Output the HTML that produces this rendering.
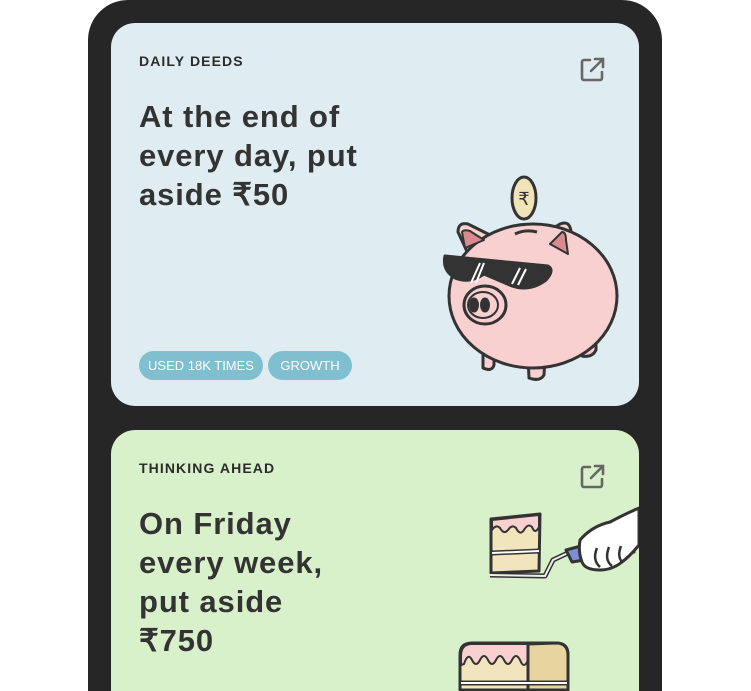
<!DOCTYPE html>
<html><head><style>
html,body{margin:0;padding:0;background:#fff;width:751px;height:691px;overflow:hidden;font-family:"Liberation Sans",sans-serif;position:relative;}
.frame{position:absolute;left:88px;top:0;width:574px;height:691px;background:#262626;border-radius:40px 40px 0 0;}
.card{position:absolute;left:111px;width:528px;border-radius:24px;overflow:hidden;}
.c1{top:23px;height:383px;background:#dfedf2;}
.c2{top:430px;height:261px;background:#d9f1cb;border-radius:24px 24px 0 0;}
.lab{position:absolute;left:28px;font-size:14px;font-weight:bold;color:#2b2b2b;letter-spacing:1.1px;}
.h{position:absolute;left:28px;font-size:31px;font-weight:bold;color:#333;line-height:39px;letter-spacing:0.9px;}
.pill{position:absolute;top:328px;height:29px;border-radius:15px;background:#7fbfcf;color:#fff;font-size:13px;line-height:29px;text-align:center;}
.ext{position:absolute;right:33px;}
</style></head><body>
<div class="frame"></div>
<div class="card c1">
 <div class="lab" style="top:30px">DAILY DEEDS</div>
 <div class="h" style="top:74px">At the end of<br>every day, put<br>aside ₹50</div>
 <div class="pill" style="left:28px;width:124px">USED 18K TIMES</div>
 <div class="pill" style="left:157px;width:84px">GROWTH</div>
 <svg class="ext" style="top:33px" width="28" height="28" viewBox="0 0 28 28" fill="none" stroke="#666" stroke-width="2.6" stroke-linecap="round"><path d="M12 4H6a2 2 0 0 0-2 2v16a2 2 0 0 0 2 2h16a2 2 0 0 0 2-2v-6"/><path d="M13 15L25 3M17 3h8v8"/></svg>
 <svg style="position:absolute;left:319px;top:147px" width="200" height="220" viewBox="430 170 200 220" stroke="#333" stroke-width="3" stroke-linejoin="round">
  <ellipse cx="524" cy="198" rx="12" ry="21" fill="#f1e3b8"/>
  <text x="524" y="205" font-size="18" text-anchor="middle" fill="#333" stroke="none">₹</text>
  <path d="M470 258 L458 232 Q458 222 468 224 L500 240Z" fill="#f9d0d0"/>
  <path d="M540 236 L560 224 Q570 220 571 232 L572 262Z" fill="#f9d0d0"/>
  <path d="M483 353 L483 368 Q492 372 494 365 L494 350Z" fill="#f9d0d0"/>
  <path d="M528 357 L529 378 Q540 382 544 375 L545 358Z" fill="#f9d0d0"/>
  <path d="M580 340 L582 356 Q592 358 596 350 L596 335Z" fill="#f9d0d0"/>
  <ellipse cx="533" cy="296" rx="84" ry="72" fill="#f9d0d0"/>
  <path d="M465 248 L462 232 Q464 229 470 231 L484 240Z M550 244 L562 232 Q566 232 566 240 L568 254Z" fill="#d98a8f" stroke="#333" stroke-width="2"/>
  <path d="M515 234 Q525 229 537 232" fill="none"/>
  <path d="M445 256 L548 266 Q555 270 546 280 Q530 292 512 286 L484 274 Q470 284 455 278 Q442 270 445 256Z" fill="#333"/>
  <path d="M471 283 L480 263 M476 283 L484 263 M512 284 L520 268 M518 285 L526 269" stroke="#fff" stroke-width="2"/>
  <ellipse cx="485" cy="305" rx="21" ry="19" fill="#f9d0d0"/>
  <ellipse cx="483" cy="305" rx="15" ry="13" fill="#f9d0d0" stroke-width="2"/>
  <ellipse cx="474" cy="305" rx="3.5" ry="6" fill="#333"/>
  <ellipse cx="485" cy="305" rx="3.5" ry="6" fill="#333"/>
 </svg>
</div>
<div class="card c2">
 <div class="lab" style="top:30px">THINKING AHEAD</div>
 <div class="h" style="top:74px">On Friday<br>every week,<br>put aside<br>₹750</div>
 <svg class="ext" style="top:33px" width="28" height="28" viewBox="0 0 28 28" fill="none" stroke="#666" stroke-width="2.6" stroke-linecap="round"><path d="M12 4H6a2 2 0 0 0-2 2v16a2 2 0 0 0 2 2h16a2 2 0 0 0 2-2v-6"/><path d="M13 15L25 3M17 3h8v8"/></svg>
 <svg style="position:absolute;left:329px;top:70px" width="199" height="191" viewBox="440 500 199 191" stroke="#333" stroke-width="3" stroke-linejoin="round">
  <path d="M491 519 L540 514 L539 571 L491 573Z" fill="#f2e4bd"/>
  <path d="M492 520 L539 515 L539 527 Q535 535 532 527 Q528 523 524 530 Q520 536 516 528 Q512 524 508 530 Q504 535 500 528 Q496 524 492 530Z" fill="#f9d0d0" stroke-width="2"/>
  <path d="M492 553 L539 551" stroke-width="5"/><path d="M492 553 L539 551" stroke="#fff" stroke-width="2"/>
  <path d="M490 575 L545 576 L553 560 L570 552" fill="none" stroke-width="5"/>
  <path d="M490 575 L545 576 L553 560 L570 552" fill="none" stroke="#eee" stroke-width="2"/>
  <path d="M566 550 L600 541 Q612 538 632 540 L634 552 L572 562Z" fill="#7b8fd6"/>
  <path d="M580 540 Q592 526 610 522 Q625 514 639 508 L639 545 Q630 556 622 562 Q612 570 600 570 Q585 570 582 562 Q578 552 580 540Z" fill="#fff"/>
  <path d="M597 548 Q592 560 600 567 M609 547 Q604 560 612 566 M621 546 Q617 556 622 562" fill="none" stroke-width="2.5"/>
  <path d="M460 690 L460 655 Q460 643 472 643 L556 643 Q568 643 568 655 L568 690Z" fill="#f2e4bd"/>
  <path d="M528 644 L556 643 Q568 643 568 655 L568 690 L528 690Z" fill="#e8d49f"/>
  <path d="M461 656 Q461 644 472 644 L528 644 L528 660 Q524 670 520 660 Q516 652 512 660 Q508 668 504 660 Q500 652 496 660 Q492 668 488 660 Q484 652 480 660 Q476 668 472 660 Q468 652 464 664 L461 665Z" fill="#f9d0d0" stroke-width="2"/>
  <path d="M528 644 L528 690" />
  <path d="M461 683 L567 683" stroke-width="5"/><path d="M461 683 L567 683" stroke="#fff" stroke-width="2"/>
 </svg>
</div>
</body></html>
